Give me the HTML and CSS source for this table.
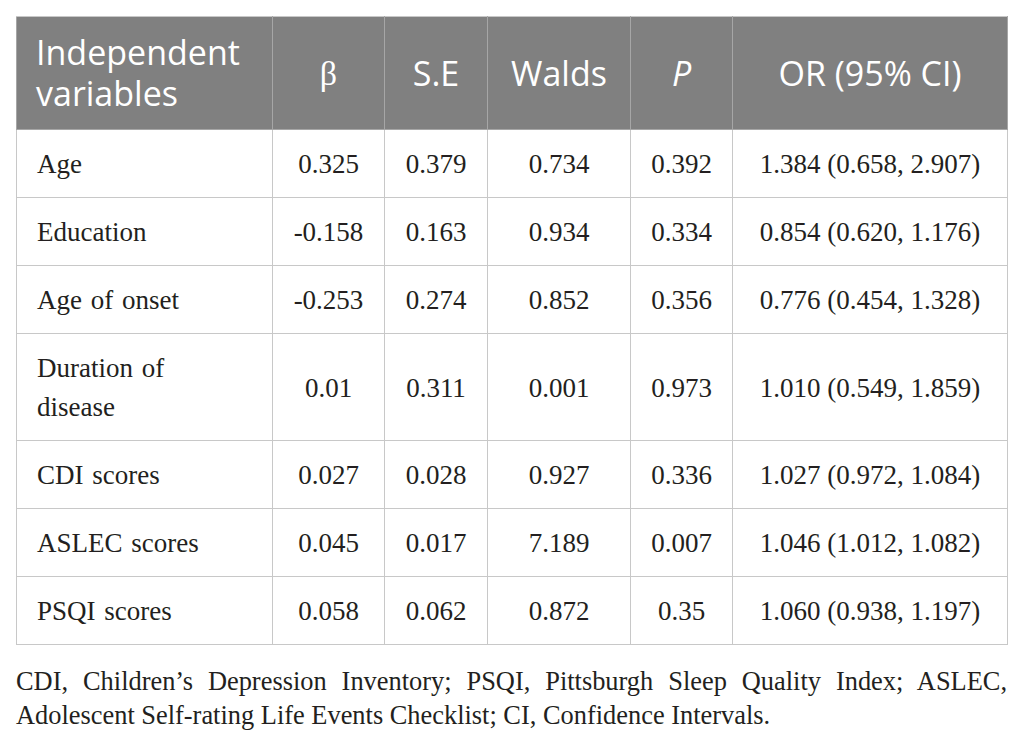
FILE: index.html
```html
<!DOCTYPE html>
<html>
<head>
<meta charset="utf-8">
<link rel="stylesheet" href="styles.css">
</head>
<body>
<div class="wrap">
<table class="tbl">
  <colgroup>
    <col class="c1"><col class="c2"><col class="c3"><col class="c4"><col class="c5"><col class="c6">
  </colgroup>
  <thead>
    <tr>
      <th class="left">Independent variables</th>
      <th class="beta">β</th>
      <th>S.E</th>
      <th>Walds</th>
      <th><i>P</i></th>
      <th>OR (95% CI)</th>
    </tr>
  </thead>
  <tbody>
    <tr><td class="left">Age</td><td>0.325</td><td>0.379</td><td>0.734</td><td>0.392</td><td>1.384 (0.658, 2.907)</td></tr>
    <tr><td class="left">Education</td><td>-0.158</td><td>0.163</td><td>0.934</td><td>0.334</td><td>0.854 (0.620, 1.176)</td></tr>
    <tr><td class="left">Age of onset</td><td>-0.253</td><td>0.274</td><td>0.852</td><td>0.356</td><td>0.776 (0.454, 1.328)</td></tr>
    <tr><td class="left">Duration of disease</td><td>0.01</td><td>0.311</td><td>0.001</td><td>0.973</td><td>1.010 (0.549, 1.859)</td></tr>
    <tr><td class="left">CDI scores</td><td>0.027</td><td>0.028</td><td>0.927</td><td>0.336</td><td>1.027 (0.972, 1.084)</td></tr>
    <tr><td class="left">ASLEC scores</td><td>0.045</td><td>0.017</td><td>7.189</td><td>0.007</td><td>1.046 (1.012, 1.082)</td></tr>
    <tr><td class="left">PSQI scores</td><td>0.058</td><td>0.062</td><td>0.872</td><td>0.35</td><td>1.060 (0.938, 1.197)</td></tr>
  </tbody>
</table>
<p class="note">CDI, Children’s Depression Inventory; PSQI, Pittsburgh Sleep Quality Index; ASLEC, Adolescent Self-rating Life Events Checklist; CI, Confidence Intervals.</p>
</div>
</body>
</html>
```
FILE: styles.css
```css
html, body {
  margin: 0;
  padding: 0;
  background: #ffffff;
}
.wrap {
  padding: 16px 19px 0 16px;
}
.tbl {
  width: 991px;
  border-collapse: collapse;
  table-layout: fixed;
  font-family: "Liberation Serif", "Times New Roman", serif;
  color: #231f20;
}
.c1 { width: 256px; }
.c2 { width: 112px; }
.c3 { width: 103px; }
.c4 { width: 143px; }
.c5 { width: 102px; }
.c6 { width: 275px; }
.tbl th {
  background: #808080;
  color: #ffffff;
  font-family: "Open Sans", "Noto Sans", sans-serif;
  font-weight: 400;
  font-size: 34px;
  line-height: 41px;
  padding: 15px 8px 15px 8px;
  text-align: center;
  vertical-align: middle;
  border: 1px solid #a6a6a6;
  border-top-color: #c8c8c8;
}
.tbl th.left {
  text-align: left;
  padding-left: 19px;
}
.tbl th.beta {
  font-family: "Liberation Serif", "Times New Roman", serif;
  font-size: 34px;
}
.tbl td {
  font-size: 27px;
  line-height: 39px;
  padding: 15px 6px 13px 6px;
  text-align: center;
  vertical-align: middle;
  border: 1px solid #c8c8c8;
}
.tbl td.left {
  text-align: left;
  padding-left: 20px;
  padding-right: 40px;
  word-spacing: 2px;
}
.note {
  margin: 19px 0 0 0;
  width: 991px;
  font-family: "Liberation Serif", "Times New Roman", serif;
  font-size: 26.4px;
  line-height: 34px;
  color: #231f20;
  text-align: justify;
}
```
